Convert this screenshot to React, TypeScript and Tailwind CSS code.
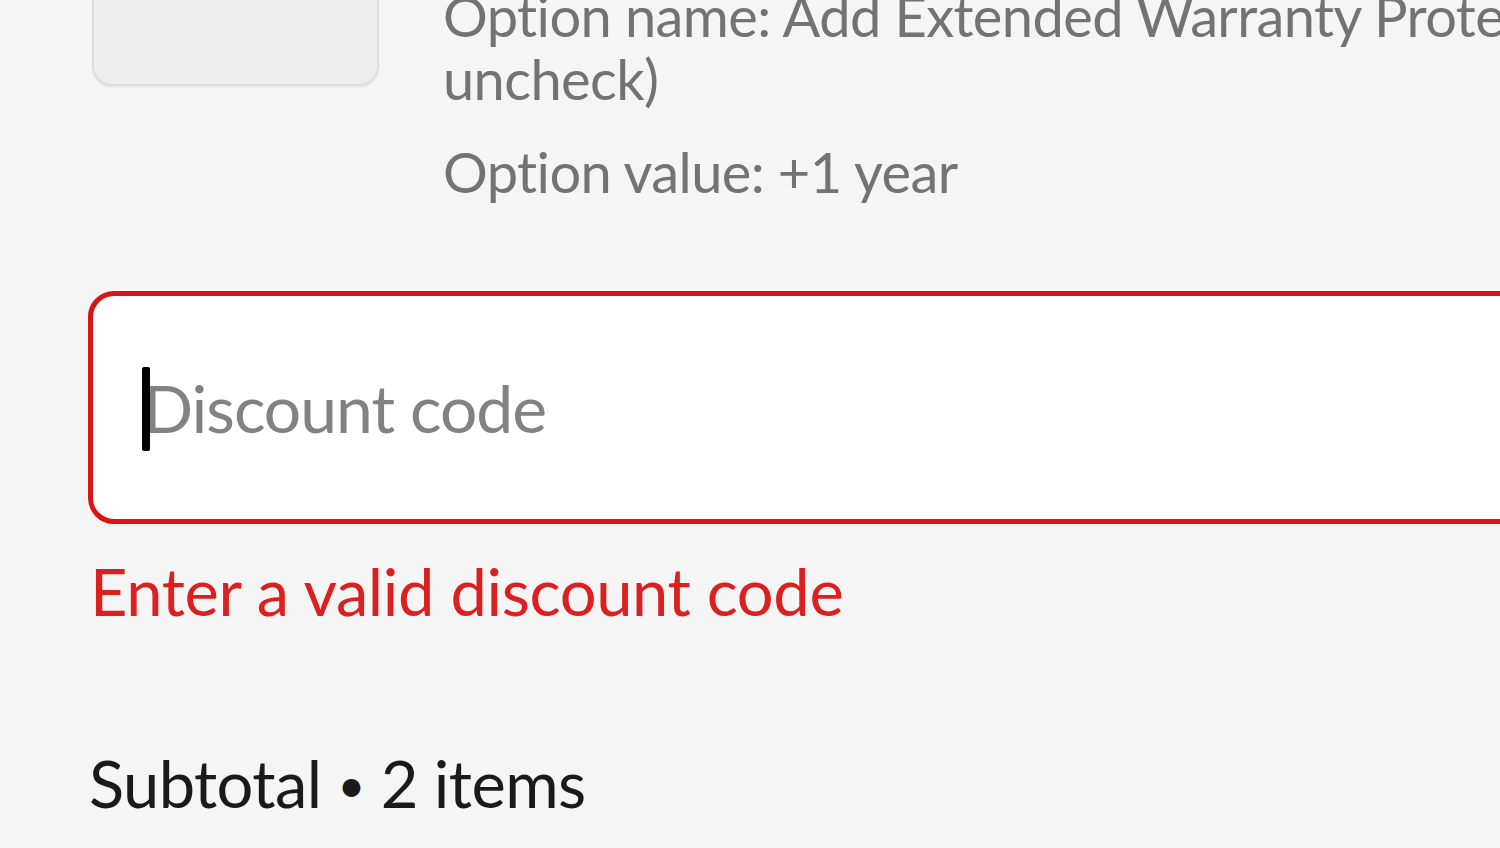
import React from "react";

export default function App() {
  return (
    <div className="w-[1500px] h-[848px] overflow-hidden bg-[#f5f5f5] font-['Lato','Open_Sans',sans-serif]">
      <div className="pl-[88px] mt-[-114px] w-[1700px]">
        <div className="flex items-start">
          <div className="ml-[4px] w-[287px] h-[200px] rounded-[20px] bg-[#eeeeee] border-[2px] border-[#dedede] shadow-[0_2px_2px_rgba(0,0,0,0.05)] shrink-0" />
          <div className="ml-[64px] mt-[98px] text-[56px] leading-[63px] tracking-[-0.6px] text-[#737373]">
            <p className="whitespace-nowrap">
              Option name: Add Extended Warranty Protection (check or
              <br />
              uncheck)
            </p>
            <p className="mt-[30px] whitespace-nowrap">Option value: +1 year</p>
          </div>
        </div>

        <div className="mt-[88px] h-[233px] w-[1600px] rounded-[26px] border-[5px] border-[#d81414] bg-white flex items-center">
          <div className="relative pl-[50px] text-[66px] leading-[80px] tracking-[-1px] text-[#828282]">
            <span className="absolute left-[49px] top-[-1px] w-[8px] h-[84px] bg-black rounded-[2px]" />
            Discount code
          </div>
        </div>

        <p className="mt-[28px] text-[65px] leading-[78px] tracking-[-0.35px] text-[#dc1f1f] pl-[2px]">
          Enter a valid discount code
        </p>

        <p className="mt-[114px] text-[65px] leading-[78px] tracking-[-0.6px] text-[#1a1a1a] pl-[1px]">
          Subtotal <span className="text-[48px] align-[0.12em]">•</span> 2 items
        </p>
      </div>
    </div>
  );
}
